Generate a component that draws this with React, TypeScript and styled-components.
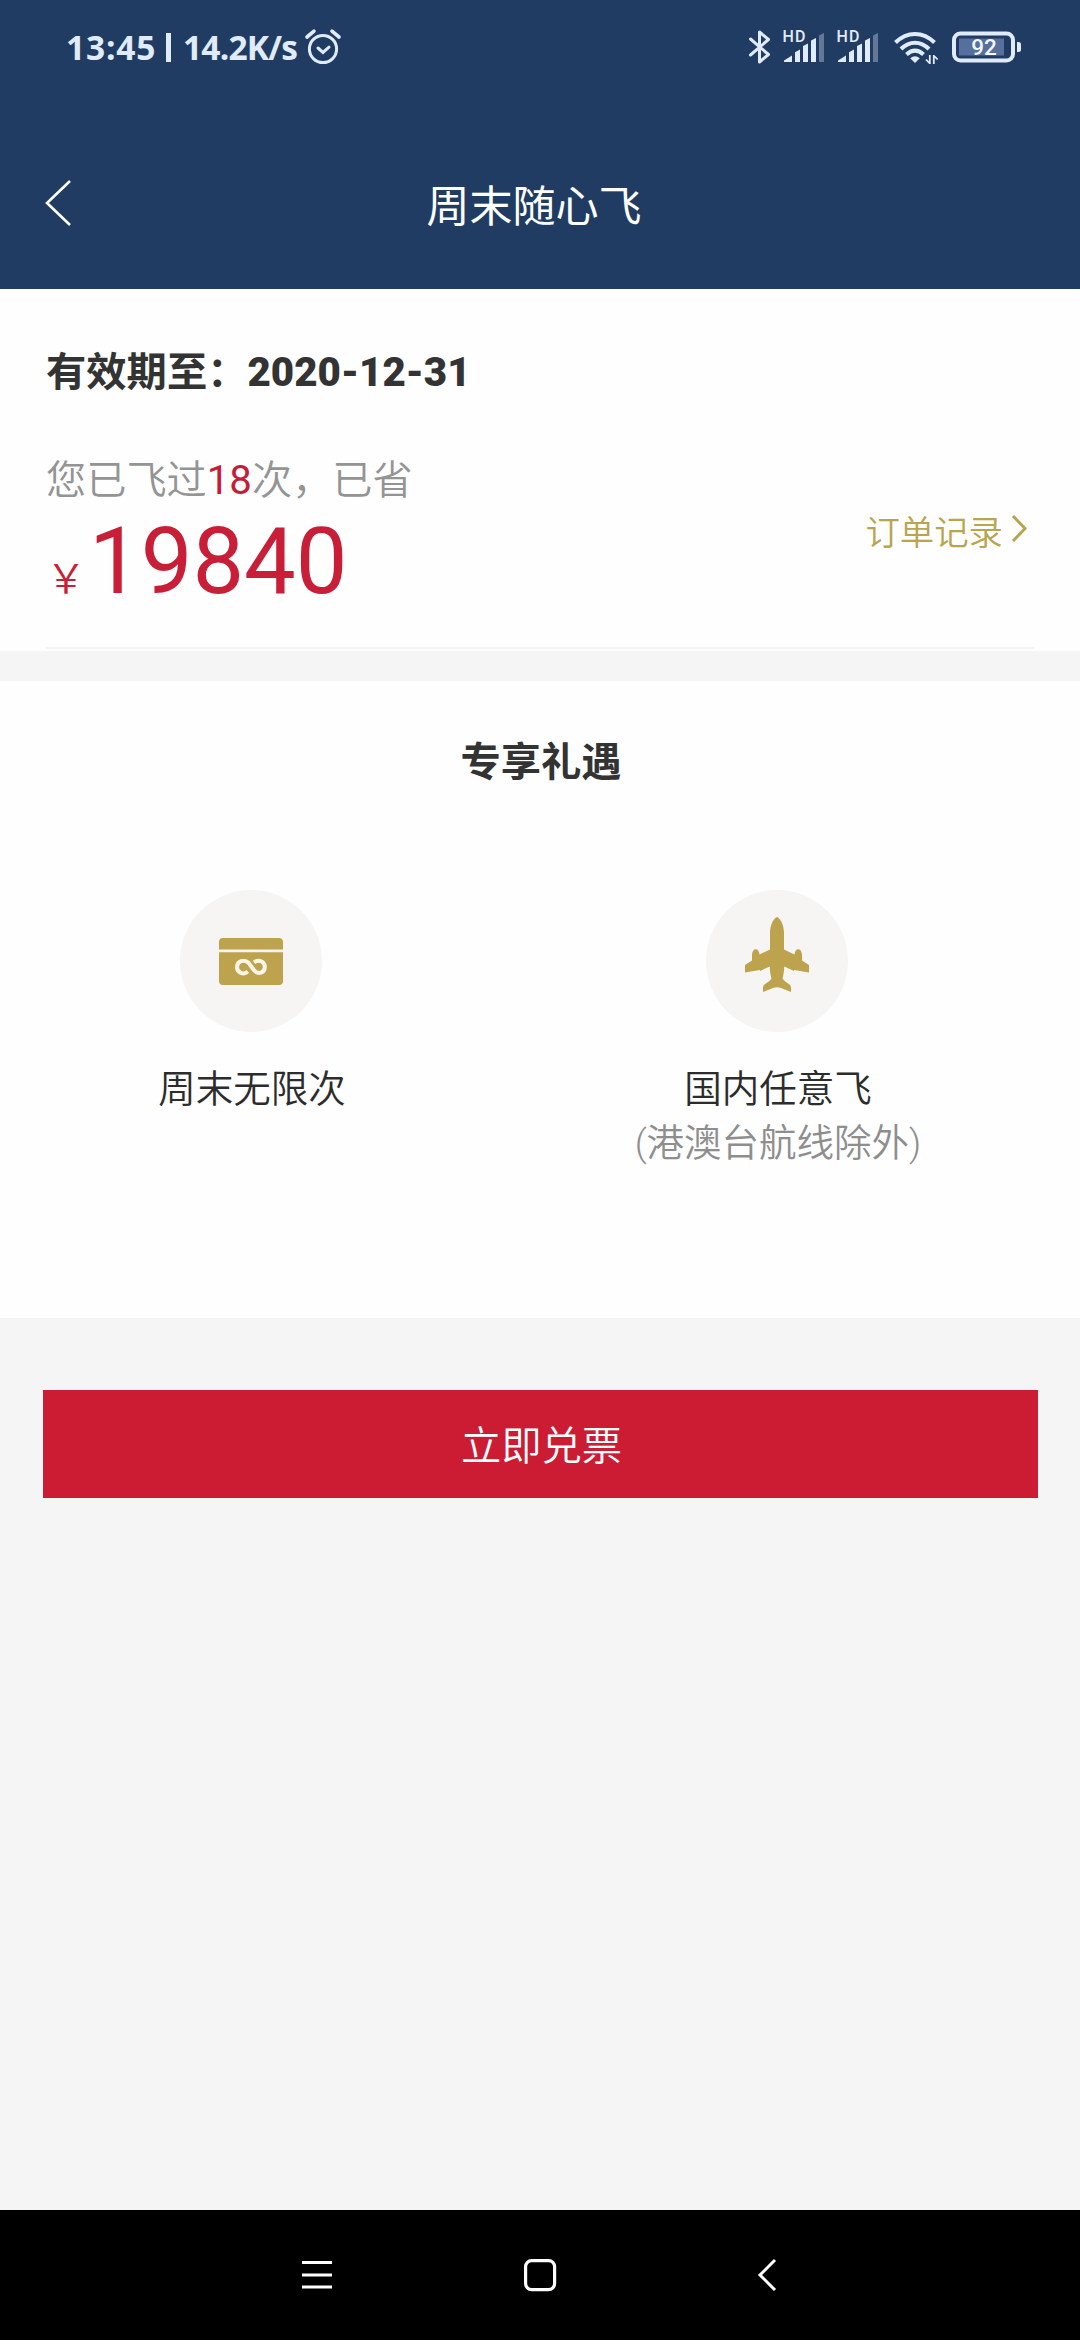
import React from 'react';
import styled, { createGlobalStyle } from 'styled-components';

const GlobalStyle = createGlobalStyle`
  * { box-sizing: border-box; }
  body {
    margin: 0;
    background: #f5f5f5;
    font-family: Roboto, "Noto Sans CJK SC", sans-serif;
  }
  svg { display: block; flex: none; }
`;

const cjkBook = '"Noto Sans CJK SC DemiLight", "Noto Sans CJK SC", sans-serif';

const Screen = styled.div`
  width: 1080px;
  height: 2340px;
  display: flex;
  flex-direction: column;
  background: #f5f5f5;
  overflow: hidden;
`;

const Header = styled.header`
  height: 289px;
  background: #213c62;
  color: #fff;
`;

const StatusBar = styled.div`
  height: 96px;
  padding: 0 58px 0 66px;
  display: flex;
  justify-content: space-between;
  color: #e0ecfd;
`;

const StatusGroup = styled.div`
  display: flex;
  align-items: center;
  height: 94px;
`;

const StatusText = styled.span<{ $width: number; $spacing: number }>`
  width: ${(p) => p.$width}px;
  font-family: "Open Sans", sans-serif;
  font-size: 33.5px;
  font-weight: 700;
  line-height: 40px;
  letter-spacing: ${(p) => p.$spacing}px;
  white-space: nowrap;
`;

const Divider = styled.i`
  width: 5px;
  height: 29px;
  margin: 0 12px 0 10px;
  background: currentColor;
`;

const TitleBar = styled.div`
  height: 193px;
  display: grid;
  grid-template-columns: 100px 1fr 100px;
  padding-top: 82px;
`;

const BackButton = styled.button`
  height: 50px;
  padding: 0 0 0 44px;
  border: 0;
  background: none;
  color: inherit;
`;

const Title = styled.h1`
  margin: 0;
  padding: 1px 12px 0 0;
  font-size: 43px;
  font-weight: 400;
  line-height: 56px;
  text-align: center;
`;

const Summary = styled.section`
  height: 362px;
  padding: 57px 46px 0;
  background: #fefefe;
`;

const Validity = styled.div`
  height: 54px;
  font-size: 40.3px;
  font-weight: 700;
  line-height: 54px;
  color: #333;
`;

const ValidDate = styled.span`
  font-weight: 900;
`;

const SavingRow = styled.div`
  display: flex;
  justify-content: space-between;
  height: 249px;
  padding-top: 54px;
  border-bottom: 2px solid #f4f4f4;
`;

const Flown = styled.div`
  font-family: Roboto, ${cjkBook};
  font-size: 40.2px;
  line-height: 54px;
  font-weight: 350;
  color: #949494;
`;

const Count = styled.span`
  color: #c41d3a;
  font-weight: 400;
`;

const Amount = styled.div`
  display: flex;
  align-items: baseline;
  margin-top: 9px;
  line-height: 90px;
  color: #c81e38;
`;

const Currency = styled.span`
  width: 43px;
  font-family: ${cjkBook};
  font-size: 40px;
  font-weight: 350;
`;

const Value = styled.span`
  font-size: 92px;
`;

const OrdersLink = styled.a`
  display: flex;
  height: 50px;
  margin-top: 53px;
  font-family: ${cjkBook};
  font-size: 34.4px;
  line-height: 46px;
  font-weight: 350;
  color: #b9a54f;
`;

const Perks = styled.section`
  height: 637px;
  margin-top: 30px;
  padding-top: 55px;
  background: #fefefe;
`;

const PerksTitle = styled.h2`
  margin: 0 0 100px;
  padding-left: 2px;
  font-size: 40.3px;
  font-weight: 700;
  line-height: 54px;
  text-align: center;
  color: #333;
`;

const PerkGrid = styled.div`
  display: grid;
  grid-template-columns: 502px 550px;
`;

const Perk = styled.div`
  display: flex;
  flex-direction: column;
  align-items: center;
`;

const PerkBadge = styled.div`
  width: 142px;
  height: 142px;
  margin-bottom: 30px;
  border-radius: 50%;
  display: flex;
  justify-content: center;
  background: #f7f5f3;
`;

const PerkText = styled.div<{ $muted?: boolean }>`
  padding-left: 2px;
  font-family: Roboto, ${cjkBook};
  font-size: 37.5px;
  font-weight: 350;
  line-height: 54px;
  color: ${(p) => (p.$muted ? '#8e8e8e' : '#2c2c2c')};
`;

const RedeemButton = styled.button`
  height: 108px;
  margin: 72px 42px 0 43px;
  padding: 0 0 4px 2px;
  border: 0;
  background: #cb1c34;
  color: #fff;
  font-family: ${cjkBook};
  font-size: 40.3px;
  font-weight: 350;
`;

const NavBar = styled.nav`
  height: 130px;
  margin-top: auto;
  padding: 0 300px;
  display: flex;
  justify-content: space-between;
  align-items: center;
  background: #000;
`;

const AlarmIcon = () => (
  <svg width="38" height="38" viewBox="0 0 38 38" fill="none" stroke="currentColor" strokeWidth="3" strokeLinecap="round">
    <circle cx="19" cy="21" r="13.6" />
    <path d="M14 20l5 4.400 6-5.200" />
    <path d="M3 9l7-5.800M28 3.200l7 5.800" strokeWidth="3.600" />
  </svg>
);

const BluetoothIcon = () => (
  <svg width="24" height="36" viewBox="0 0 24 36" fill="none" stroke="currentColor" strokeWidth="3" strokeLinejoin="round" strokeLinecap="round">
    <path d="M2.500 10L20.500 25.500 11.500 33V3L20.500 10.500 2.500 26" />
  </svg>
);

const SignalIcon = () => (
  <svg width="46" height="44" viewBox="-1 -4 46 44" fill="currentColor">
    <text x="-0.500" y="13.300" fontSize="16" fontWeight="500" fontFamily="Roboto, sans-serif" textLength="23">HD</text>
    <path d="M1 33v-1.500l8-5V33zM12 33V23.200l5-2.700V33zM20 33V17l5-2.500V33zM28 33V11.500l5-2.500V33z" />
    <path d="M36 33V6.500l5-2.500v29z" opacity=".35" />
  </svg>
);

const WifiIcon = () => (
  <svg width="46" height="36" viewBox="0 0 46 36" fill="none" stroke="currentColor" strokeWidth="4">
    <path d="M2.500 13.500C14 2 30 2 41.500 13.500M8 20C16.500 11.500 27.500 11.500 36 20M13.500 25.500C19 20.500 25 20.500 30.500 25.500" />
    <path d="M17.200 29.200q4.800-3.800 9.600 0L22 34z" fill="currentColor" stroke="none" />
    <path d="M36.800 26v9M36.800 34.500l-3.800-4M40.800 35v-9M40.800 26.500l3.800 4" strokeWidth="1.800" />
  </svg>
);

const BatteryIcon = () => (
  <svg width="70" height="32" viewBox="0 0 70 32">
    <rect x="2" y="2.500" width="59" height="27" rx="6.500" fill="none" stroke="currentColor" strokeWidth="4" />
    <rect x="7" y="7.500" width="45" height="17" fill="#566f9c" />
    <path d="M65 11h1.500q2.500 0 2.500 2.500v5q0 2.500-2.500 2.500H65z" fill="currentColor" />
    <text x="32" y="24" textAnchor="middle" fontSize="22.500" fontWeight="500" fontFamily="Roboto, sans-serif" fill="#f2f7ff">92</text>
  </svg>
);

const TicketIcon = () => (
  <svg width="66" height="142" viewBox="0 0 66 142" fill="#bda34e">
    <path d="M1 59.500V52q0-4 4-4h56q4 0 4 4v7.500zM1 62.200h64V91q0 4-4 4H5q-4 0-4-4z" />
    <path d="M29.800 81.600C25.500 85.500 19 82.500 19 77S26 68.500 30.600 72.800L35.800 80C40.500 85.500 46.800 82.500 46.800 77S41 68.800 36 72.400" fill="none" stroke="#fdf5e6" strokeWidth="4" />
  </svg>
);

const PlaneIcon = () => (
  <svg width="66" height="142" viewBox="0 0 66 142" fill="#bda34e">
    <path d="M33 27C29 28.500 26 36 26 43V59.500L15.500 64.500C15 57.500 8.500 57.500 8 64.500V70.500L1 75V82.500L16 80V81L25.700 76.500C26 82 26.500 85 27.500 88.500C24 93.500 19 93.500 19 98V102L29 98C31.500 97 34.500 97 37 98L47 102V98C47 93.500 42 93.500 38.500 88.500C39.500 85 40 82 40.300 76.500L50 81V80L65 82.500V75L58 70.500V64.500C57.500 57.500 51 57.500 50.500 64.500L40 59.500V43C40 36 37 28.500 33 27Z" />
  </svg>
);

const Spacer = styled.span<{ $w: number }>`
  width: ${(p) => p.$w}px;
`;

export default function App() {
  return (
    <>
      <GlobalStyle />
      <Screen>
        <Header>
          <StatusBar>
            <StatusGroup>
              <StatusText $width={90} $spacing={0.8}>13:45</StatusText>
              <Divider />
              <StatusText $width={115} $spacing={-0.8}>14.2K/s</StatusText>
              <Spacer $w={6} />
              <AlarmIcon />
            </StatusGroup>
            <StatusGroup>
              <BluetoothIcon />
              <Spacer $w={10} />
              <SignalIcon />
              <Spacer $w={8} />
              <SignalIcon />
              <Spacer $w={11} />
              <WifiIcon />
              <Spacer $w={13} />
              <BatteryIcon />
            </StatusGroup>
          </StatusBar>
          <TitleBar>
            <BackButton aria-label="返回">
              <svg width="28" height="50" viewBox="0 0 28 50" fill="none" stroke="currentColor" strokeWidth="2.600">
                <path d="M26 3L3 25l23 22" />
              </svg>
            </BackButton>
            <Title>周末随心飞</Title>
          </TitleBar>
        </Header>

        <Summary>
          <Validity>
            有效期至：<ValidDate>2020-12-31</ValidDate>
          </Validity>
          <SavingRow>
            <div>
              <Flown>
                您已飞过<Count>18</Count>次，已省
              </Flown>
              <Amount>
                <Currency>￥</Currency>
                <Value>19840</Value>
              </Amount>
            </div>
            <OrdersLink>
              订单记录
              <svg width="31" height="50" viewBox="0 0 31 50" fill="none" stroke="currentColor" strokeWidth="3">
                <path d="M10 9l12 12.500L10 34" />
              </svg>
            </OrdersLink>
          </SavingRow>
        </Summary>

        <Perks>
          <PerksTitle>专享礼遇</PerksTitle>
          <PerkGrid>
            <Perk>
              <PerkBadge><TicketIcon /></PerkBadge>
              <PerkText>周末无限次</PerkText>
            </Perk>
            <Perk>
              <PerkBadge><PlaneIcon /></PerkBadge>
              <PerkText>国内任意飞</PerkText>
              <PerkText $muted>(港澳台航线除外)</PerkText>
            </Perk>
          </PerkGrid>
        </Perks>

        <RedeemButton>立即兑票</RedeemButton>

        <NavBar>
          <svg width="34" height="34" viewBox="0 0 34 34" stroke="#fff" strokeWidth="3">
            <path d="M2 4.500h30M2 17h30M2 29h30" />
          </svg>
          <svg width="36" height="36" viewBox="0 0 36 36" fill="none" stroke="#fff" strokeWidth="3.200">
            <rect x="3.600" y="3.600" width="29" height="29" rx="6" />
          </svg>
          <svg width="34" height="36" viewBox="0 0 34 36" fill="none" stroke="#fff" strokeWidth="3">
            <path d="M29 3L14 18l15 15" />
          </svg>
        </NavBar>
      </Screen>
    </>
  );
}
